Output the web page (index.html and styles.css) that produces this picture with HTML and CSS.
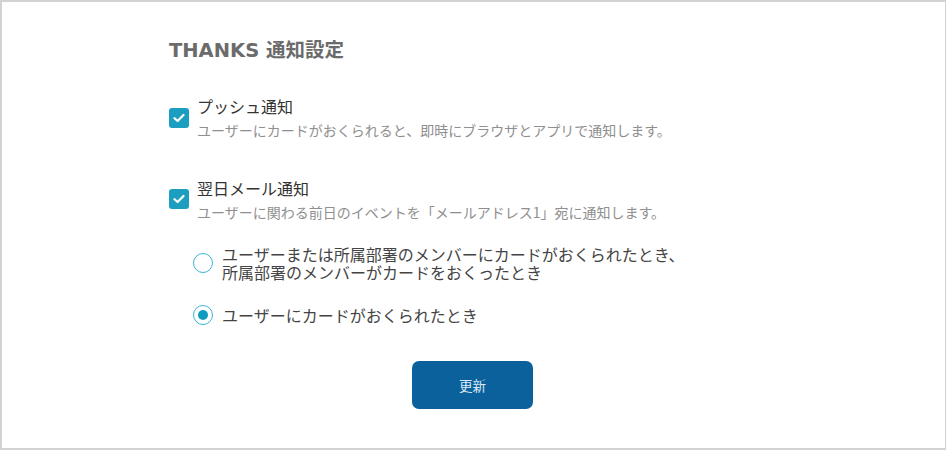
FILE: index.html
```html
<!DOCTYPE html>
<html lang="ja">
<head>
<meta charset="utf-8">
<link rel="stylesheet" href="styles.css">
</head>
<body>
<div class="frame">
  <div class="content">
    <h1 class="title">THANKS 通知設定</h1>
    <div class="option first">
      <span class="check">
        <svg width="12" height="10" viewBox="0 0 12 10"><path d="M1.5 5.2 L4.6 8 L10.5 2" fill="none" stroke="#fff" stroke-width="2.2" stroke-linecap="round" stroke-linejoin="round"/></svg>
      </span>
      <div class="texts">
        <div class="label">プッシュ通知</div>
        <div class="desc">ユーザーにカードがおくられると、即時にブラウザとアプリで通知します。</div>
      </div>
    </div>
    <div class="option second">
      <span class="check">
        <svg width="12" height="10" viewBox="0 0 12 10"><path d="M1.5 5.2 L4.6 8 L10.5 2" fill="none" stroke="#fff" stroke-width="2.2" stroke-linecap="round" stroke-linejoin="round"/></svg>
      </span>
      <div class="texts">
        <div class="label">翌日メール通知</div>
        <div class="desc">ユーザーに関わる前日のイベントを「メールアドレス1」宛に通知します。</div>
      </div>
    </div>
    <div class="radios">
      <div class="radio-row">
        <span class="radio"></span>
        <div class="radio-text">ユーザーまたは所属部署のメンバーにカードがおくられたとき、<br>所属部署のメンバーがカードをおくったとき</div>
      </div>
      <div class="radio-row single">
        <span class="radio on"><span class="dot"></span></span>
        <div class="radio-text">ユーザーにカードがおくられたとき</div>
      </div>
    </div>
    <div class="actions">
      <button class="btn">更新</button>
    </div>
  </div>
</div>
</body>
</html>
```

FILE: styles.css
```css
* { box-sizing: border-box; }
html, body { margin: 0; padding: 0; }
body {
  width: 946px;
  height: 450px;
  background: #fff;
  font-family: "Noto Sans CJK JP", "Noto Sans", sans-serif;
}
.frame {
  width: 946px;
  height: 450px;
  border: 2px solid #d2d2d2;
  border-right-width: 1px;
  background: #fff;
}
.content {
  padding: 36px 0 0 167px;
}
.title {
  margin: 0;
  font-family: "DejaVu Sans", "Noto Sans CJK JP", sans-serif;
  font-size: 19.5px;
  font-weight: bold;
  color: #6b6b6b;
  line-height: 26px;
}
.option {
  display: flex;
  align-items: flex-start;
}
.option.first { margin-top: 31px; }
.option.second { margin-top: 37px; }
.check {
  width: 20px;
  height: 20px;
  margin-top: 12px;
  border-radius: 3px;
  background: #1b9ec0;
  display: flex;
  align-items: center;
  justify-content: center;
  flex: none;
}
.option.first .check { margin-top: 13px; }
.texts { margin-left: 8px; }
.label {
  font-size: 16px;
  line-height: 22px;
  color: #333;
}
.desc {
  font-size: 14px;
  line-height: 20px;
  color: #8f8f8f;
  margin-top: 3px;
}
.radios {
  margin-left: 24px;
  margin-top: 23px;
}
.radio-row {
  display: flex;
  align-items: center;
}
.radio-row.single { margin-top: 24px; }
.radio {
  width: 20px;
  height: 20px;
  border: 1.5px solid #3ab3d3;
  border-radius: 50%;
  flex: none;
  display: flex;
  align-items: center;
  justify-content: center;
}
.dot {
  width: 10px;
  height: 10px;
  border-radius: 50%;
  background: #0f9bc0;
}
.radio-text {
  margin-left: 9px;
  font-size: 16px;
  line-height: 18px;
  color: #444;
}
.actions {
  display: flex;
  padding-left: 243px;
  margin-top: 36px;
}
.btn {
  width: 121px;
  height: 48px;
  border: none;
  border-radius: 7px;
  background: #0a619c;
  color: #dce9f5;
  font-family: "Noto Sans CJK JP", sans-serif;
  font-size: 13.5px;
}
```
